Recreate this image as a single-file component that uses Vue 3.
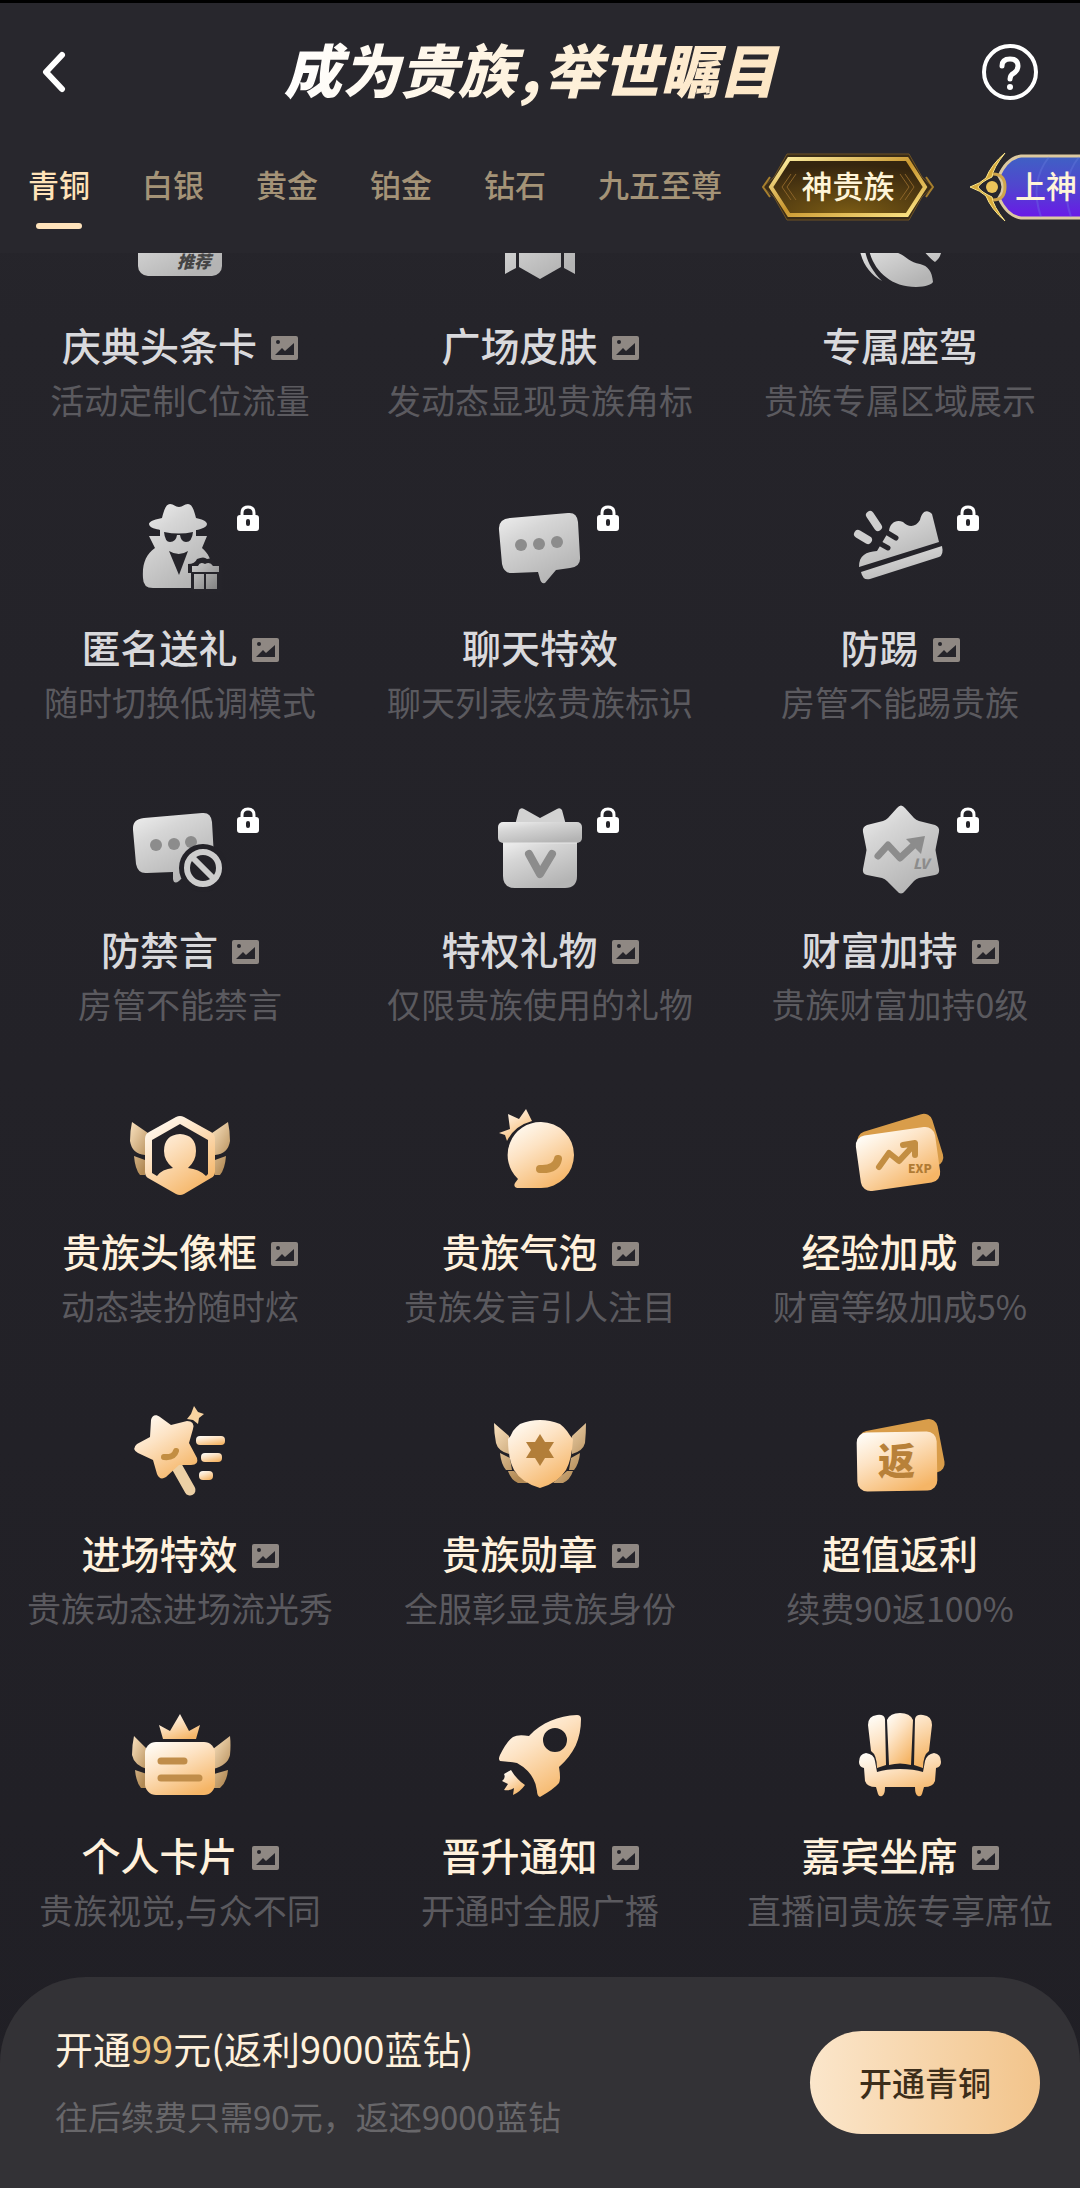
<script setup>
import { ref } from 'vue'

const tabs = ['青铜', '白银', '黄金', '铂金', '钻石', '九五至尊']
const active = ref('青铜')

const list = ref([
  { icon: 'headline', name: '庆典头条卡', desc: '活动定制C位流量', preview: true, mark: '推荐' },
  { icon: 'ribbon', name: '广场皮肤', desc: '发动态显现贵族角标', preview: true },
  { icon: 'mount', name: '专属座驾', desc: '贵族专属区域展示' },
  { icon: 'spy', name: '匿名送礼', desc: '随时切换低调模式', preview: true, locked: true },
  { icon: 'chat', name: '聊天特效', desc: '聊天列表炫贵族标识', locked: true },
  { icon: 'shoe', name: '防踢', desc: '房管不能踢贵族', preview: true, locked: true },
  { icon: 'mute', name: '防禁言', desc: '房管不能禁言', preview: true, locked: true },
  { icon: 'gift', name: '特权礼物', desc: '仅限贵族使用的礼物', preview: true, locked: true },
  { icon: 'level', name: '财富加持', desc: '贵族财富加持0级', preview: true, locked: true, mark: 'LV' },
  { icon: 'avatar', name: '贵族头像框', desc: '动态装扮随时炫', preview: true, owned: true },
  { icon: 'bubble', name: '贵族气泡', desc: '贵族发言引人注目', preview: true, owned: true },
  { icon: 'exp', name: '经验加成', desc: '财富等级加成5%', preview: true, owned: true, mark: 'EXP' },
  { icon: 'wand', name: '进场特效', desc: '贵族动态进场流光秀', preview: true, owned: true },
  { icon: 'medal', name: '贵族勋章', desc: '全服彰显贵族身份', preview: true, owned: true },
  { icon: 'rebate', name: '超值返利', desc: '续费90返100%', owned: true, mark: '返' },
  { icon: 'card', name: '个人卡片', desc: '贵族视觉,与众不同', preview: true, owned: true },
  { icon: 'rocket', name: '晋升通知', desc: '开通时全服广播', preview: true, owned: true },
  { icon: 'seat', name: '嘉宾坐席', desc: '直播间贵族专享席位', preview: true, owned: true },
])
</script>

<template>
  <div class="page">
    <!-- icon sprite -->
    <svg class="sprite" width="0" height="0" aria-hidden="true">
      <defs>
        <linearGradient id="silver" x1="0" y1="0" x2="0.6" y2="1">
          <stop offset="0" stop-color="#f0f0f0" />
          <stop offset="0.35" stop-color="#d6d6d6" />
          <stop offset="1" stop-color="#b4b4b4" />
        </linearGradient>
        <linearGradient id="steel" x1="0" y1="0" x2="1" y2="1">
          <stop offset="0" stop-color="#cccccc" />
          <stop offset="1" stop-color="#808080" />
        </linearGradient>
        <linearGradient id="gold" x1="0.1" y1="0" x2="0.7" y2="1">
          <stop offset="0" stop-color="#fffdf8" />
          <stop offset="0.4" stop-color="#fde3c4" />
          <stop offset="1" stop-color="#f5b566" />
        </linearGradient>
        <linearGradient id="wing" x1="0" y1="0" x2="0.6" y2="1">
          <stop offset="0" stop-color="#fbe3c0" />
          <stop offset="1" stop-color="#b28a55" />
        </linearGradient>
        <linearGradient id="badgeGold" x1="0" y1="0" x2="1" y2="1">
          <stop offset="0" stop-color="#fff2a8" />
          <stop offset="0.5" stop-color="#c9962e" />
          <stop offset="1" stop-color="#ffe98a" />
        </linearGradient>
        <radialGradient id="badgeFill" cx="0.5" cy="1" r="0.9">
          <stop offset="0" stop-color="#7d5d14" />
          <stop offset="1" stop-color="#35250f" />
        </radialGradient>
        <linearGradient id="badgeBlue" x1="0" y1="0" x2="0" y2="1">
          <stop offset="0" stop-color="#3f61c4" />
          <stop offset="0.5" stop-color="#5145cf" />
          <stop offset="1" stop-color="#6a18e8" />
        </linearGradient>
      </defs>

      <symbol id="headline" viewBox="0 0 120 100">
        <rect x="18" y="14" width="84" height="67" rx="10" fill="url(#silver)" />
      </symbol>
      <symbol id="ribbon" viewBox="0 0 120 100">
        <path d="M39 12H81V72L60 84L39 72Z M25 12H36V73L25 79Z M84 12H95V79L84 73Z" fill="url(#silver)" />
      </symbol>
      <symbol id="mount" viewBox="0 0 120 100">
        <path d="M28 40C26 66 44 92 76 92C86 92 92 89 93 87C92 76 88 71 80 69C68 67 66 60 55 57L50 40Z" fill="url(#silver)" />
        <path d="M19 48C20 66 29 79 42 86C30 74 25 62 24 48Z M82 54C88 61 92 65 95 67C99 64 101 60 102 54Z" fill="url(#silver)" />
      </symbol>
      <symbol id="spy" viewBox="0 0 120 100">
        <path d="M42 21C44 13 46 7 50 7C54 7 55 10 59 10C63 10 64 7 68 7C72 7 74 13 76 21C81 22 87 24 87 27C87 31 77 33 76 33V39H87L82 51C88 56 92 63 92 74V91H33Q23 91 23 81C22 67 26 57 35 51L29 39H40V33C37 32 29 31 29 27C29 24 37 22 42 21Z" fill="url(#silver)" />
        <path d="M44 35Q59 38 73 35Q72 45 66 45Q61 45 60 38H57Q56 45 50 45Q45 45 44 35Z" fill="#25242a" />
        <path d="M49 54Q59 60 68 54L59 78Z" fill="#25242a" />
        <path d="M68 67Q75 67 77 62Q84 59 87 62Q93 60 95 66H102V95H71V76H68Z" fill="#25242a" />
        <path d="M72 69H78Q80 64 85 67Q90 64 93 69H99V75H72Z M74 77H84V92H74Z M86 77H97V92H86Z" fill="url(#steel)" />
      </symbol>
      <symbol id="chat" viewBox="0 0 120 100">
        <path d="M30 21L88 16Q97 15 98 25L100 60Q101 70 90 71L76 73L65 86Q61 87 60 82L58 75L33 76Q24 77 22 67L19 33Q18 22 30 21Z" fill="url(#silver)" />
        <g fill="#8c8c8c">
          <circle cx="41" cy="48" r="6" />
          <circle cx="59" cy="47" r="6" />
          <circle cx="77" cy="45" r="6" />
        </g>
      </symbol>
      <symbol id="shoe" viewBox="0 0 120 100">
        <path d="M19 70C19 58 26 55 37 54L49 34C50 26 56 22 63 25C69 31 76 30 80 23C82 14 87 12 92 17L99 45Z" fill="url(#silver)" />
        <path d="M21 75L102 49Q104 58 99 60L30 82Q23 84 21 75Z" fill="url(#silver)" />
        <path d="M46 35L56 41M39 46L48 51" stroke="#25242a" stroke-width="5" stroke-linecap="round" />
        <path d="M30 18L38 30M18 37L28 43" stroke="#cfcfcf" stroke-width="8" stroke-linecap="round" />
      </symbol>
      <symbol id="mute" viewBox="0 0 120 100">
        <path d="M24 19L82 14Q91 13 92 23L94 58Q95 68 84 69L70 71L59 82Q54 86 53 80L53 73L27 74Q18 75 16 65L13 31Q12 20 24 19Z" fill="url(#silver)" />
        <g fill="#8c8c8c">
          <circle cx="36" cy="46" r="6" />
          <circle cx="54" cy="45" r="6" />
          <circle cx="71" cy="43" r="6" />
        </g>
        <circle cx="83" cy="69" r="24" fill="#232228" />
        <circle cx="83" cy="69" r="16" fill="none" stroke="#cdcdcd" stroke-width="6" />
        <path d="M72 58L94 80" stroke="#cdcdcd" stroke-width="6" />
      </symbol>
      <symbol id="gift" viewBox="0 0 120 100">
        <path d="M35 26L39 11Q41 8 44 10L60 19L77 10Q80 8 82 11L86 26Z" fill="#d2d2d2" />
        <path d="M23 43H97V77Q97 89 85 89H35Q23 89 23 77Z" fill="url(#silver)" />
        <rect x="18" y="23" width="84" height="21" rx="5" fill="url(#silver)" />
        <path d="M23 44H97" stroke="#e8e8e8" stroke-width="1" />
        <path d="M49 55L60 75L72 55" fill="none" stroke="#8c8c8c" stroke-width="8" stroke-linecap="round" stroke-linejoin="round" />
      </symbol>
      <symbol id="level" viewBox="0 0 120 100">
        <path d="M57 9Q61 4 65 9L74 19Q76 21 79 22L95 26Q100 28 99 33L96 48Q95 51 96 54L99 70Q100 75 95 76L79 79Q76 80 74 82L65 92Q61 97 57 92L47 82Q45 80 42 79L27 76Q22 75 23 70L26 54Q27 51 26 48L23 33Q22 28 27 26L43 22Q46 21 48 19Z" fill="url(#silver)" />
        <path d="M38 57L48 46L60 59L75 45" fill="none" stroke="#8c8c8c" stroke-width="7" stroke-linecap="round" stroke-linejoin="round" />
        <path d="M85 37L66 40L81 55Z" fill="#8c8c8c" />
      </symbol>
      <symbol id="avatar" viewBox="0 0 120 100">
        <path d="M12 21L28 32L25 54Q12 53 10 40Q10 30 12 21Z M14 55L25 59V74H20Q15 68 14 55Z" fill="url(#wing)" />
        <path d="M108 21L92 32L95 54Q108 53 110 40Q110 30 108 21Z M106 55L95 59V74H100Q105 68 106 55Z" fill="url(#wing)" />
        <path fill-rule="evenodd" d="M56 16Q60 14 64 16L91 31Q95 33 95 38V71Q95 75 91 77L64 93Q60 95 56 93L28 77Q25 75 25 71V38Q25 33 29 31Z M60 23L32 39V72L37 75Q42 68 53 67Q44 60 44 50Q44 34 60 33Q76 34 76 50Q76 60 68 67Q79 68 86 75L88 73V39Z" fill="url(#gold)" />
      </symbol>
      <symbol id="bubble" viewBox="0 0 120 100">
        <path d="M28 13L39 18L46 8L52 20Q34 25 27 40L25 34L19 32L30 28Z" fill="url(#gold)" />
        <path d="M61 21A33 33 0 1 1 61 87H37Q33 86 35 82L38 78A33 33 0 0 1 61 21Z" fill="url(#gold)" />
        <path d="M60 68Q76 69 78 58" fill="none" stroke="#c38e42" stroke-width="8" stroke-linecap="round" />
      </symbol>
      <symbol id="exp" viewBox="0 0 120 100">
        <rect x="22" y="21" width="78" height="54" rx="9" transform="rotate(-17 60 50)" fill="#d99d4a" />
        <rect x="18" y="30" width="80" height="56" rx="10" transform="rotate(-8 58 58)" fill="url(#gold)" />
        <path d="M39 66L49 52L59 60L73 45M63 44L75 42V54" fill="none" stroke="#c38e42" stroke-width="6" stroke-linecap="round" stroke-linejoin="round" />
      </symbol>
      <symbol id="wand" viewBox="0 0 120 100">
        <path d="M57 64L70 87" stroke="#ecd0a5" stroke-width="11" stroke-linecap="round" />
        <path d="M31 17C32 12 36 11 40 14L51 22L67 18Q75 18 73 26L69 40L77 55Q79 62 71 62H59L46 74Q40 78 37 71L33 57L18 50Q11 46 17 41L30 34Z" fill="url(#gold)" />
        <path d="M44 54Q54 55 56 48" fill="none" stroke="#c38e42" stroke-width="6" stroke-linecap="round" />
        <path d="M74 3L78 9L84 11L79 15L78 21L73 17L67 16L71 11Z" fill="#f8d3a0" />
        <rect x="76" y="33" width="29" height="9" rx="4" fill="url(#gold)" />
        <rect x="81" y="50" width="21" height="9" rx="4" fill="url(#gold)" />
        <rect x="79" y="68" width="14" height="9" rx="4" fill="url(#gold)" />
      </symbol>
      <symbol id="medal" viewBox="0 0 120 100">
        <path d="M14 20L29 33V51Q18 48 16 40Q14 30 14 20Z M20 50L30 55L32 67H26Q21 61 20 50Z M28 68H34L48 80H38Q31 77 28 68Z" fill="url(#wing)" />
        <path d="M106 20L92 33V51Q103 48 105 40Q106 30 106 20Z M100 50L91 55L89 67H94Q99 61 100 50Z M93 68H87L73 80H83Q90 77 93 68Z" fill="url(#wing)" />
        <path d="M33 28Q36 24 40 21Q60 13 80 21Q84 24 87 28Q90 33 93 36Q92 56 86 67Q78 80 60 85Q42 80 34 67Q28 56 28 36Q31 33 33 28Z" fill="url(#gold)" />
        <path d="M60 31L65 39H74L69 47L74 55H65L60 63L55 55H46L51 47L46 39H55Z" fill="#b27e39" />
      </symbol>
      <symbol id="rebate" viewBox="0 0 120 100">
        <rect x="22" y="22" width="80" height="54" rx="9" transform="rotate(-11 60 50)" fill="#d99d4a" />
        <rect x="17" y="29" width="80" height="59" rx="10" transform="rotate(-1 57 58)" fill="url(#gold)" />
      </symbol>
      <symbol id="card" viewBox="0 0 120 100">
        <path d="M14 31L27 44V64Q14 60 12 50Q12 40 14 31Z M15 65L27 69V83H21Q16 77 15 65Z" fill="url(#wing)" />
        <path d="M110 31L93 44V64Q108 60 110 50Q111 40 110 31Z M108 65L94 69V83H100Q107 77 108 65Z" fill="url(#wing)" />
        <path d="M39 20L50 26L60 9L69 26L80 20L76 34H43Z" fill="url(#gold)" />
        <rect x="25" y="37" width="70" height="53" rx="11" fill="url(#gold)" />
        <path d="M41 56H64M41 73H79" stroke="#c08d4a" stroke-width="7" stroke-linecap="round" />
      </symbol>
      <symbol id="rocket" viewBox="0 0 120 100">
        <path fill-rule="evenodd" d="M97 10Q101 10 101 14C101 34 94 49 79 62Q81 74 79 78Q74 84 60 92Q57 91 57 86Q55 68 37 58Q30 57 20 56Q18 54 20 50Q27 36 33 32Q38 29 49 31C62 17 78 11 97 10Z M75 23A12 12 0 1 0 75 47A12 12 0 1 0 75 23Z" fill="url(#gold)" />
        <path d="M31 65Q36 74 45 80Q40 87 33 90L34 83Q30 86 24 85L28 79L22 76Q26 73 24 69Z" fill="url(#gold)" />
      </symbol>
      <symbol id="seat" viewBox="0 0 120 100">
        <path d="M37 10Q44 9 45 14L46 60L37 63Q37 50 31 46L28 20Q28 11 37 10Z M83 10Q76 9 75 14L74 60L83 63Q83 50 89 46L92 20Q92 11 83 10Z" fill="url(#gold)" />
        <path d="M47 15Q50 8 60 8Q70 8 73 15L71 60Q60 57 49 60Z" fill="url(#gold)" />
        <path d="M26 48Q34 49 35 56L37 67Q46 64 60 64Q74 64 83 67L85 56Q87 49 94 48Q101 49 101 57Q101 62 96 63L95 76Q93 82 84 82L82 89Q81 92 78 91Q75 90 75 82H45Q45 90 42 91Q39 92 38 89L36 82Q27 82 25 76L24 63Q19 62 19 57Q19 49 26 48Z" fill="url(#gold)" />
      </symbol>
    </svg>

    <header class="header">
      <div class="title-bar">
        <button class="icon-button" type="button" aria-label="返回">
          <svg width="40" height="56" viewBox="0 0 40 56">
            <path d="M20 11L4 28L20 45" fill="none" stroke="#fff" stroke-width="6" stroke-linecap="round" stroke-linejoin="round" />
          </svg>
        </button>
        <h1 class="title">成为贵族<span class="comma">,</span>举世瞩目</h1>
        <button class="icon-button" type="button" aria-label="帮助">
          <svg width="56" height="56" viewBox="0 0 56 56" fill="none" stroke="#fff">
            <circle cx="28" cy="28" r="26" stroke-width="4" />
            <path d="M20 22Q20 15 28 15Q36 15 36 22Q36 26 32 29Q28 31 28 35" stroke-width="5" stroke-linecap="round" />
            <circle cx="28" cy="43" r="3" fill="#fff" stroke="none" />
          </svg>
        </button>
      </div>

      <nav class="tabs">
        <button
          v-for="tab in tabs"
          :key="tab"
          type="button"
          :class="['tab', { active: tab === active }]"
          @click="active = tab"
        >{{ tab }}</button>

        <button class="badge god" type="button">
          <svg width="172" height="70" viewBox="0 0 172 70">
            <path d="M25 2H147L160 25L171 35L160 45L147 68H25L12 45L1 35L12 25Z" fill="#3a2c17" stroke="#6e5325" />
            <path d="M27 7H145L163 35L145 63H27L9 35Z" fill="url(#badgeFill)" stroke="url(#badgeGold)" stroke-width="4" />
            <path d="M8 25L1 35L8 45M164 25L171 35L164 45" fill="none" stroke="#a77f2d" stroke-width="2" />
            <path d="M29 22L20 35L29 48M143 22L152 35L143 48M34 22L25 35L34 48M138 22L147 35L138 48" fill="none" stroke="#8b6328" />
          </svg>
          <span>神贵族</span>
        </button>
        <button class="badge upper" type="button">
          <svg width="172" height="70" viewBox="0 0 172 70">
            <path d="M180 4H52Q38 6 30 24Q38 35 30 46Q38 64 52 66H180Z" fill="url(#badgeBlue)" stroke="#dcc9a0" stroke-width="3" />
            <path d="M80 5Q60 30 72 65M110 5Q90 30 102 65" fill="none" stroke="#7184e4" stroke-width="2" opacity="0.3" />
            <path d="M36 1Q22 13 17 26Q12 31 1 35Q12 39 17 44Q22 57 36 69Q24 54 23 45Q12 40 9 35Q12 30 23 25Q24 16 36 1Z" fill="#d8ab3c" stroke="#ffe98c" />
            <path d="M24 22Q36 22 36 35Q36 48 24 48" fill="none" stroke="#cfa54b" stroke-width="3" />
            <circle cx="23" cy="35" r="6" fill="#ecc45a" />
          </svg>
          <span>上神</span>
        </button>
      </nav>
    </header>

    <main class="features">
      <section v-for="item in list" :key="item.name" :class="['feature', { owned: item.owned }]">
        <div class="art">
          <svg width="120" height="100" aria-hidden="true"><use :href="'#' + item.icon" /></svg>
          <span v-if="item.mark" :class="['mark', 'mark-' + item.icon]">{{ item.mark }}</span>
          <svg v-if="item.locked" class="lock" width="24" height="26" viewBox="0 0 24 26">
            <path d="M6 12V8Q6 2 12 2Q18 2 18 8V12" fill="none" stroke="#fff" stroke-width="3" />
            <path fill-rule="evenodd" d="M4 10H20Q23 10 23 13V23Q23 26 20 26H4Q1 26 1 23V13Q1 10 4 10Z M12 14Q10 14 10 16V19Q10 21 12 21Q14 21 14 19V16Q14 14 12 14Z" fill="#fff" />
          </svg>
        </div>
        <h2 class="name">
          {{ item.name }}
          <svg v-if="item.preview" class="preview" width="27" height="24" viewBox="0 0 27 24">
            <rect width="27" height="24" rx="2" fill="#8f8883" />
            <circle cx="7" cy="6" r="2" fill="#25242a" />
            <path d="M4 19L11 12L14 15L23 7V19Z" fill="#25242a" />
          </svg>
        </h2>
        <p class="desc">{{ item.desc }}</p>
      </section>
    </main>

    <footer class="footer">
      <div class="offer">
        <p class="price">开通<em>99</em>元(返利9000蓝钻)</p>
        <p class="renew">往后续费只需90元，返还9000蓝钻</p>
      </div>
      <button class="open" type="button">开通{{ active }}</button>
    </footer>
  </div>
</template>

<style>
body {
  margin: 0;
  background: #333236;
}
</style>

<style scoped>
.page {
  overflow: clip;
  font-family: "Noto Sans CJK SC", sans-serif;
  background: linear-gradient(#28272d, #25242a 15%, #201f25);
}

.sprite {
  position: absolute;
}

button {
  padding: 0;
  border: none;
  background: none;
  font-family: inherit;
  cursor: pointer;
}

h1,
h2,
p {
  margin: 0;
}

.header {
  position: sticky;
  top: 0;
  z-index: 1;
  border-top: 3px solid #000;
  background: #28272d;
}

.title-bar {
  display: flex;
  align-items: center;
  justify-content: space-between;
  height: 138px;
  padding: 0 42px;
}

.icon-button {
  display: flex;
}

.title {
  padding: 0 4px 8px 0;
  font-size: 58px;
  line-height: 80px;
  font-weight: 900;
  font-style: italic;
  white-space: nowrap;
  color: transparent;
  background: linear-gradient(100deg, #fff, #fef3e0 45%, #fde6c4);
  -webkit-background-clip: text;
  background-clip: text;
}

.comma {
  padding: 0 4px;
}

.tabs {
  display: flex;
  align-items: center;
  gap: 52px;
  overflow: hidden;
  height: 92px;
  padding: 0 0 20px 28px;
}

.tab {
  position: relative;
  flex: none;
  height: 92px;
  padding-bottom: 6px;
  font-size: 31px;
  line-height: 86px;
  font-weight: 500;
  color: #a49377;
}

.tab.active {
  color: #ffe3b8;
}

.tab.active::after {
  content: "";
  position: absolute;
  left: 8px;
  right: 8px;
  bottom: 4px;
  height: 6px;
  border-radius: 3px;
  background: #ffe3bb;
}

.badge {
  display: grid;
  flex: none;
  place-items: center;
  font-size: 31px;
  line-height: 66px;
  font-weight: 500;
  color: #fff5d8;
}

.badge > * {
  grid-area: 1 / 1;
}

.badge span {
  padding-bottom: 4px;
}

.god {
  margin-left: -12px;
}

.upper {
  margin-left: -17px;
}

.upper span {
  justify-self: start;
  padding-left: 46px;
}

/* first row sits partly under the sticky header */
.features {
  display: grid;
  grid-template-columns: repeat(3, 1fr);
  row-gap: 75px;
  margin-top: -58px;
  padding-bottom: 45px;
}

.feature {
  display: flex;
  flex-direction: column;
  align-items: center;
  color: #d9d9dc;
}

.owned {
  color: #fff1dc;
}

.art {
  position: relative;
  height: 100px;
  margin-bottom: 23px;
}

.lock {
  position: absolute;
  left: 116px;
  top: 8px;
}

/* lettering on top of the icons */
.mark {
  position: absolute;
  font-weight: 900;
  font-style: italic;
  white-space: nowrap;
}

.mark-headline {
  left: 57px;
  top: 54px;
  font-size: 17px;
  line-height: 24px;
  color: #444;
}

.mark-level {
  left: 73px;
  top: 54px;
  font-size: 14px;
  line-height: 20px;
  color: #8c8c8c;
}

.mark-exp {
  left: 68px;
  top: 58px;
  font-size: 12px;
  line-height: 18px;
  font-style: normal;
  color: #b07b34;
}

.mark-rebate {
  left: 38px;
  top: 34px;
  font-size: 37px;
  line-height: 44px;
  font-style: normal;
  color: #b88139;
}

.name {
  display: flex;
  align-items: center;
  gap: 14px;
  margin-bottom: 9px;
  font-size: 39px;
  line-height: 52px;
  font-weight: 500;
  white-space: nowrap;
}

.preview {
  margin-top: 8px;
}

.desc {
  margin-bottom: 1px;
  font-size: 34px;
  line-height: 42px;
  white-space: nowrap;
  color: #5b5a5f;
}

.footer {
  position: sticky;
  bottom: 0;
  display: flex;
  align-items: center;
  justify-content: space-between;
  padding: 45px 40px 45px 55px;
  border-radius: 86px 86px 0 0;
  background: #333236;
}

.offer {
  padding-bottom: 6px;
}

.price {
  margin-bottom: 21px;
  font-size: 38px;
  line-height: 52px;
  color: #fff1dc;
}

.price em {
  font-style: normal;
  color: #edc57e;
}

.renew {
  font-size: 33px;
  line-height: 42px;
  color: #68676a;
}

.open {
  padding: 0 49px;
  border-radius: 52px;
  font-size: 33px;
  line-height: 103px;
  font-weight: 500;
  color: #3c2d1a;
  background: linear-gradient(90deg, #fbe6cb, #f2c48b);
}
</style>
